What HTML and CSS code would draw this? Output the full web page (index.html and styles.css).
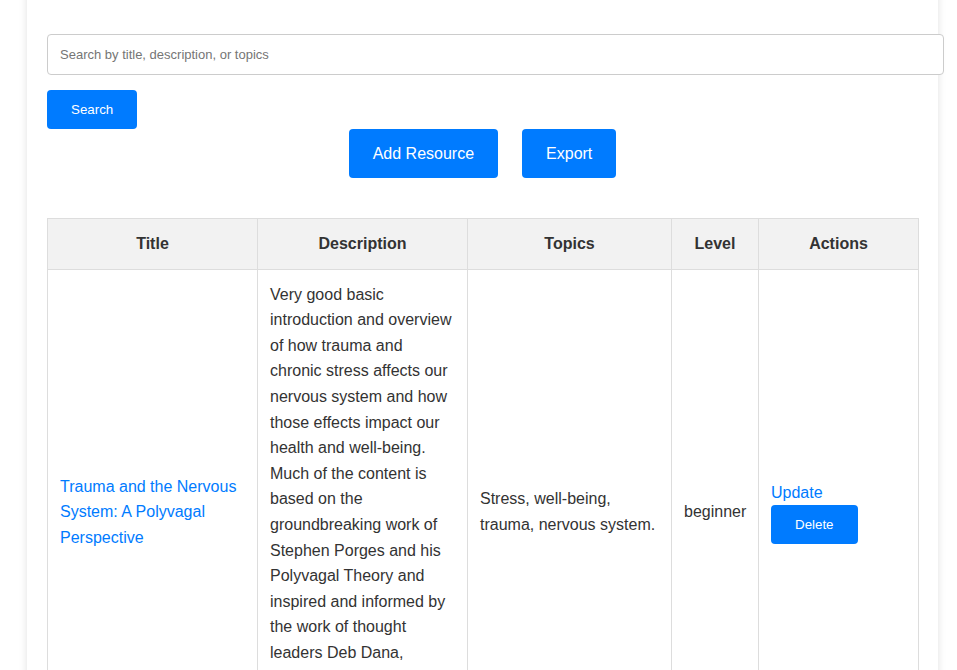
FILE: index.html
```html
<!DOCTYPE html>
<html lang="en">
<head>
<meta charset="utf-8">
<title>Resources</title>
<link rel="stylesheet" href="styles.css">
</head>
<body>
<div class="container">
  <form class="search-form">
    <input class="search-input" type="text" placeholder="Search by title, description, or topics">
    <button class="btn" type="button">Search</button>
  </form>
  <div class="toolbar">
    <button class="btn btn-lg" type="button">Add Resource</button>
    <button class="btn btn-lg" type="button">Export</button>
  </div>
  <table class="resources">
    <thead>
      <tr>
        <th class="col-title">Title</th>
        <th class="col-desc">Description</th>
        <th class="col-topics">Topics</th>
        <th class="col-level">Level</th>
        <th class="col-actions">Actions</th>
      </tr>
    </thead>
    <tbody>
      <tr>
        <td><a href="#">Trauma and the Nervous System: A Polyvagal Perspective</a></td>
        <td>Very good basic introduction and overview of how trauma and chronic stress affects our nervous system and how those effects impact our health and well-being. Much of the content is based on the groundbreaking work of Stephen Porges and his Polyvagal Theory and inspired and informed by the work of thought leaders Deb Dana, Bessel van der Kolk, Peter Levine and Pat Ogden, and many others.</td>
        <td>Stress, well-being, trauma, nervous system.</td>
        <td>beginner</td>
        <td><a href="#">Update</a> <button class="btn" type="button">Delete</button></td>
      </tr>
    </tbody>
  </table>
</div>
</body>
</html>
```

FILE: styles.css
```css
* {
  box-sizing: content-box;
}

html, body {
  margin: 0;
  padding: 0;
  background: #ffffff;
}

body {
  font-family: "Liberation Sans", Arial, sans-serif;
  color: #333333;
  line-height: 1.6;
  font-size: 16px;
}

.container {
  margin: -20px 0 0 27px;
  width: 871px;
  padding: 54px 20px 20px 20px;
  background: #ffffff;
  box-shadow: 0 0 8px rgba(0, 0, 0, 0.12);
  min-height: 900px;
}

.search-form {
  margin: 0;
}

.search-input {
  display: block;
  width: 100%;
  padding: 12px;
  margin: 0 0 15px 0;
  border: 1px solid #cccccc;
  border-radius: 4px;
  font-family: "Liberation Sans", Arial, sans-serif;
  font-size: 13px;
  line-height: 15px;
  height: 15px;
  color: #333333;
}

.search-input::placeholder {
  color: #757575;
}

.btn {
  background: #007bff;
  color: #ffffff;
  border: none;
  border-radius: 4px;
  padding: 12px 24px;
  font-family: "Liberation Sans", Arial, sans-serif;
  font-size: 13.333px;
  line-height: 15px;
  cursor: pointer;
}

.toolbar {
  display: flex;
  justify-content: center;
  gap: 24px;
  margin: 0 0 40px 0;
}

.btn-lg {
  font-size: 16px;
  line-height: 19px;
  padding: 15px 24px;
}

.resources {
  width: 100%;
  border-collapse: collapse;
  table-layout: fixed;
}

.resources th,
.resources td {
  border: 1px solid #dddddd;
  padding: 12px;
  text-align: left;
  vertical-align: middle;
}

.resources th {
  background: #f2f2f2;
  text-align: center;
  font-weight: bold;
}

.col-title { width: 185px; }
.col-desc { width: 185px; }
.col-topics { width: 179px; }
.col-level { width: 62px; }
.col-actions { width: 135px; }

.resources a {
  color: #007bff;
  text-decoration: none;
}
```
